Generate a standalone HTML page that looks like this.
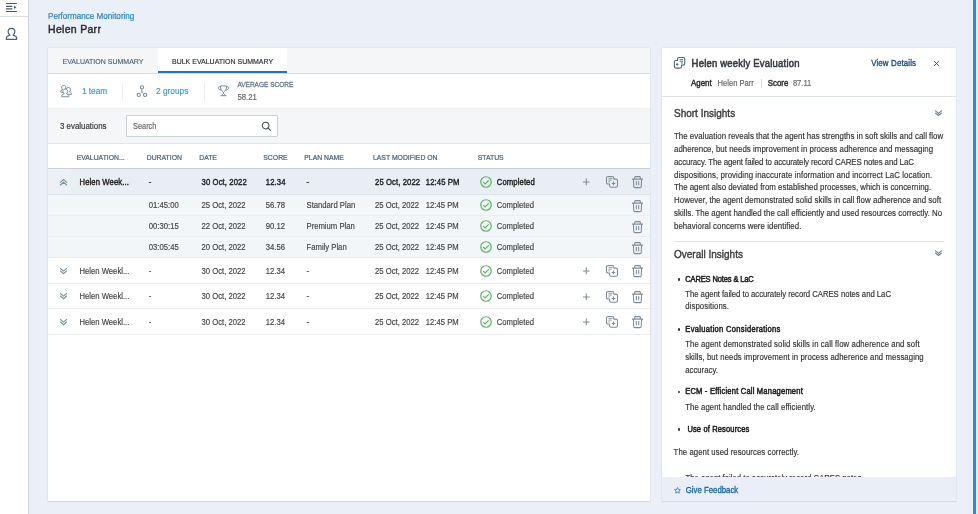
<!DOCTYPE html>
<html><head><meta charset="utf-8">
<style>
*{margin:0;padding:0;box-sizing:border-box;-webkit-text-stroke-width:0.15px}
html,body{width:978px;height:514px;overflow:hidden}
body{background:#eaeff8;font-family:"Liberation Sans",sans-serif;color:#333;position:relative}
.a{position:absolute;white-space:nowrap}
#side{position:absolute;left:0;top:0;width:29px;height:514px;background:#fff;border-right:1px solid #cfd6de}
#side .sep{position:absolute;left:0;top:15.5px;width:28px;height:1px;background:#d9dee3}
.crumb{left:48px;top:12px;font-size:8.1px;color:#2b87c3;-webkit-text-stroke-width:0.2px}
.title{left:48px;top:23px;font-size:10.5px;letter-spacing:0.3px;color:#2e2e2e;-webkit-text-stroke-width:0.45px}
#card{position:absolute;left:48px;top:48px;width:602px;height:453px;background:#fff;box-shadow:0 0 1px rgba(0,0,0,.18),0 1px 1px rgba(0,0,0,.07)}
#tabs{position:absolute;left:0;top:0;width:602px;height:26px;background:#f5f6f8;border-bottom:1px solid #d8dadd}
.tab{position:absolute;top:0;height:25px;font-size:7px;line-height:27px;color:#4d6579;letter-spacing:0;-webkit-text-stroke-width:0.1px}
.tab.act{-webkit-text-stroke-width:0.2px;background:#fff;color:#2a2f35;border-bottom:2px solid #1a79c0;height:25px}
#stats{position:absolute;left:0;top:26px;width:602px;height:34px;background:#fff}
.link{color:#3a97d3;font-size:8.3px}
.vd{position:absolute;width:1px;background:#eceef1}
#srow{position:absolute;left:0;top:60px;width:602px;height:36px;background:#f5f6f8;border-top:1px solid #eef0f2;border-bottom:1px solid #e3e5e8}
.sbox{position:absolute;left:78px;top:6px;width:152px;height:21.5px;background:#fff;border:1px solid #c9d1d9;border-radius:1px}
.th{font-size:6.85px;color:#4a6276;-webkit-text-stroke-width:0.2px}
.td{font-size:7.7px;color:#444;padding-top:1px}
.b{font-weight:400;color:#222;-webkit-text-stroke-width:0.35px;letter-spacing:0.1px}
.sb{-webkit-text-stroke-width:0.3px}
.row{position:absolute;left:0;width:602px}
.ic{position:absolute}
#panel{position:absolute;left:662px;top:48px;width:294px;height:453px;background:#fff;box-shadow:0 0 1px rgba(0,0,0,.18),0 1px 1px rgba(0,0,0,.07)}
.pt{font-size:7.9px;color:#333;line-height:12px}
.h2{font-size:10px;color:#3a3a3a;-webkit-text-stroke-width:0.35px}
.bul{left:15.9px;width:2.6px;height:2.6px;background:#333;border-radius:50%}
.bt{font-size:7.55px;color:#222;-webkit-text-stroke-width:0.45px;line-height:12px}
</style></head><body><div id="wrap" style="position:absolute;left:0;top:0;width:978px;height:514px;will-change:transform">
<div id="side">
  <svg class="ic" style="left:0;top:0" width="28" height="15" viewBox="0 0 28 15"><g stroke="#455c6d" stroke-width="1.15" stroke-linecap="round" fill="none"><path d="M6.4 3.5 H16.4 M6.4 6.3 H11.9 M6.4 8.9 H11.9 M6.4 11.5 H16.4"></path></g><path d="M14 5.8 L16.4 7.35 L14 8.9 Z" fill="#455c6d"></path></svg>
  <div class="sep"></div>
  <svg class="ic" style="left:5px;top:27px" width="13" height="13" viewBox="0 0 13 13"><path d="M6.5 1.3 C4.4 1.3 3.1 2.8 3.1 4.8 C3.1 6.2 3.8 7.3 4.9 7.8 L4.9 8.3 C2.8 8.7 1.3 9.7 1.3 11.2 L1.3 12 Q1.3 12.3 1.6 12.3 L11.4 12.3 Q11.7 12.3 11.7 12 L11.7 11.2 C11.7 9.7 10.2 8.7 8.1 8.3 L8.1 7.8 C9.2 7.3 9.9 6.2 9.9 4.8 C9.9 2.8 8.6 1.3 6.5 1.3 Z" stroke="#4a6070" stroke-width="1.15" fill="none" stroke-linejoin="round"></path></svg>
</div>

<div class="a crumb" style="transform: scaleY(1.15); transform-origin: 0px 52%;">Performance Monitoring</div>
<div class="a title ns">Helen Parr</div>

<div id="card">
  <div id="tabs">
    <div class="tab" style="left:0;width:109px;padding-left:14.5px"><span style="display: inline-block; transform: scaleY(1.15); transform-origin: 0px 52%;">EVALUATION SUMMARY</span></div>
    <div class="tab act" style="left:110px;width:129px;padding-left:14px"><span style="display: inline-block; transform: scaleY(1.15); transform-origin: 0px 52%;">BULK EVALUATION SUMMARY</span></div>
  </div>
  <div id="stats">
    <svg class="ic" style="left:11px;top:10px" width="15" height="15" viewBox="0 0 15 15"><path transform="translate(0.72,0.62) scale(0.62)" d="M6.5 1.3 C4.4 1.3 3.1 2.8 3.1 4.8 C3.1 6.2 3.8 7.3 4.9 7.8 L4.9 8.3 C2.8 8.7 1.3 9.7 1.3 11.2 L1.3 12 Q1.3 12.3 1.6 12.3 L11.4 12.3 Q11.7 12.3 11.7 12 L11.7 11.2 C11.7 9.7 10.2 8.7 8.1 8.3 L8.1 7.8 C9.2 7.3 9.9 6.2 9.9 4.8 C9.9 2.8 8.6 1.3 6.5 1.3 Z" fill="#fff" stroke="#6b8091" stroke-width="0.9" vector-effect="non-scaling-stroke" stroke-linejoin="round"></path><path transform="translate(5.37,2.72) scale(0.62)" d="M6.5 1.3 C4.4 1.3 3.1 2.8 3.1 4.8 C3.1 6.2 3.8 7.3 4.9 7.8 L4.9 8.3 C2.8 8.7 1.3 9.7 1.3 11.2 L1.3 12 Q1.3 12.3 1.6 12.3 L11.4 12.3 Q11.7 12.3 11.7 12 L11.7 11.2 C11.7 9.7 10.2 8.7 8.1 8.3 L8.1 7.8 C9.2 7.3 9.9 6.2 9.9 4.8 C9.9 2.8 8.6 1.3 6.5 1.3 Z" fill="#fff" stroke="#6b8091" stroke-width="0.9" vector-effect="non-scaling-stroke" stroke-linejoin="round"></path><path transform="translate(1.75,4.14) scale(0.7)" d="M6.5 1.3 C4.4 1.3 3.1 2.8 3.1 4.8 C3.1 6.2 3.8 7.3 4.9 7.8 L4.9 8.3 C2.8 8.7 1.3 9.7 1.3 11.2 L1.3 12 Q1.3 12.3 1.6 12.3 L11.4 12.3 Q11.7 12.3 11.7 12 L11.7 11.2 C11.7 9.7 10.2 8.7 8.1 8.3 L8.1 7.8 C9.2 7.3 9.9 6.2 9.9 4.8 C9.9 2.8 8.6 1.3 6.5 1.3 Z" fill="#fff" stroke="#6b8091" stroke-width="0.9" vector-effect="non-scaling-stroke" stroke-linejoin="round"></path></svg>
    <div class="a link" style="left: 33.9px; top: 12px; transform: scaleY(1.15); transform-origin: 0px 52%;">1 team</div>
    <div class="vd" style="left:74px;top:9px;height:18px"></div>
    <svg class="ic" style="left:88px;top:10.5px" width="12" height="13" viewBox="0 0 12 13"><g fill="none" stroke="#7590a3" stroke-width="1.1"><circle cx="5.9" cy="2.4" r="1.6"></circle><circle cx="2.7" cy="9.9" r="1.6"></circle><circle cx="9.1" cy="9.9" r="1.6"></circle><path d="M5.9 4.2 V8.2"></path></g></svg>
    <div class="a link" style="left: 108px; top: 12px; transform: scaleY(1.15); transform-origin: 0px 52%;">2 groups</div>
    <div class="vd" style="left:156px;top:9px;height:18px"></div>
    <svg class="ic" style="left:169px;top:11px" width="13" height="13" viewBox="0 0 13 13"><g fill="none" stroke="#7590a3" stroke-width="1" stroke-linejoin="round"><path d="M3.3 0.9 H9.7 C9.7 4 8.2 6.2 6.5 7.4 C4.8 6.2 3.3 4 3.3 0.9 Z"></path><path d="M3.4 1.6 C1.6 1.6 1.2 2.2 1.4 3.2 C1.7 4.2 2.6 4.8 4 5.2 M9.6 1.6 C11.4 1.6 11.8 2.2 11.6 3.2 C11.3 4.2 10.4 4.8 9 5.2"></path><path d="M6.5 7.4 V8.6 M6.5 8.4 L4.4 10.5 M6.5 8.4 L8.6 10.5 M3.5 10.7 H9.5"></path></g></svg>
    <div class="a" style="left: 189.4px; top: 6.5px; font-size: 6.5px; color: rgb(95, 115, 132); -webkit-text-stroke-width: 0.22px; transform: scaleY(1.15); transform-origin: 0px 52%;">AVERAGE SCORE</div>
    <div class="a" style="left: 189.4px; top: 19px; font-size: 7.8px; color: rgb(102, 102, 102); transform: scaleY(1.15); transform-origin: 0px 52%;">58.21</div>
  </div>
  <div id="srow">
    <div class="a" style="left: 12px; top: 12.6px; font-size: 7.9px; color: rgb(51, 51, 51); transform: scaleY(1.15); transform-origin: 0px 52%;">3 evaluations</div>
    <div class="sbox"><div class="a" style="left: 6px; top: 5.6px; font-size: 7.4px; color: rgb(102, 102, 102); transform: scaleY(1.15); transform-origin: 0px 52%;">Search</div><svg class="ic" style="left:133.7px;top:4.6px" width="11" height="11" viewBox="0 0 11 11"><circle cx="4.6" cy="4.6" r="3.35" fill="none" stroke="#46545e" stroke-width="1.05"></circle><path d="M7.1 7.1 L9.7 9.7" stroke="#46545e" stroke-width="1.1"></path></svg></div>
  </div>
  <div class="row" style="top:96px;height:25px;background:#fff;border-bottom:1px solid #c9d0d8">
<div class="a th" style="left: 28.7px; top: 1.6px; line-height: 23px; transform: scaleY(1.15); transform-origin: 0px 52%;">EVALUATION...</div>
<div class="a th" style="left: 98.7px; top: 1.6px; line-height: 23px; transform: scaleY(1.15); transform-origin: 0px 52%;">DURATION</div>
<div class="a th" style="left: 151.2px; top: 1.6px; line-height: 23px; transform: scaleY(1.15); transform-origin: 0px 52%;">DATE</div>
<div class="a th" style="left: 215.3px; top: 1.6px; line-height: 23px; transform: scaleY(1.15); transform-origin: 0px 52%;">SCORE</div>
<div class="a th" style="left: 256.3px; top: 1.6px; line-height: 23px; transform: scaleY(1.15); transform-origin: 0px 52%;">PLAN NAME</div>
<div class="a th" style="left: 325px; top: 1.6px; line-height: 23px; transform: scaleY(1.15); transform-origin: 0px 52%;">LAST MODIFIED ON</div>
<div class="a th" style="left: 429.7px; top: 1.6px; line-height: 23px; transform: scaleY(1.15); transform-origin: 0px 52%;">STATUS</div>
</div>
<div class="row" style="top:121px;height:26px;background:#e9eef5;border-bottom:1px solid #dde3ea"><div class="a" style="left:0;top:0;width:22px;height:25px;background:#edf1f6"></div><svg class="ic" style="left:11px;top:8.5px" width="9" height="9" viewBox="0 0 9 9"><path d="M1 4.6 L4.5 1.6 L8 4.6 M1 7.2 L4.5 4.2 L8 7.2" fill="none" stroke="#7b93a4" stroke-width="1.15"></path></svg><div class="a td b" style="left: 31.5px; top: 0px; line-height: 25px; transform: scaleY(1.15); transform-origin: 0px 52%;">Helen Week...</div><div class="a td b" style="left: 100.8px; top: 0px; line-height: 25px; transform: scaleY(1.15); transform-origin: 0px 52%;">-</div><div class="a td b" style="left: 153.6px; top: 0px; line-height: 25px; transform: scaleY(1.15); transform-origin: 0px 52%;">30 Oct, 2022</div><div class="a td b" style="left: 217.8px; top: 0px; line-height: 25px; transform: scaleY(1.15); transform-origin: 0px 52%;">12.34</div><div class="a td b" style="left: 258.5px; top: 0px; line-height: 25px; transform: scaleY(1.15); transform-origin: 0px 52%;">-</div><div class="a td b" style="left: 327px; top: 0px; line-height: 25px; transform: scaleY(1.15); transform-origin: 0px 52%;">25 Oct, 2022</div><div class="a td b" style="left: 377.8px; top: 0px; line-height: 25px; transform: scaleY(1.15); transform-origin: 0px 52%;">12:45 PM</div><svg class="ic" style="left:432px;top:6.5px" width="12" height="12" viewBox="0 0 12 12"><circle cx="6" cy="6" r="5.25" fill="none" stroke="#55b65c" stroke-width="1.2"></circle><path d="M3.3 6.1 L5.2 7.9 L8.7 4.3" fill="none" stroke="#55b65c" stroke-width="1.2"></path></svg><div class="a td b" style="left: 448.8px; top: 0px; line-height: 25px; transform: scaleY(1.15); transform-origin: 0px 52%;">Completed</div><svg class="ic" style="left:534px;top:8.0px" width="9" height="10" viewBox="0 0 9 10"><path d="M4.3 1.6 V8.2 M1 4.9 H7.6" stroke="#7d8c97" stroke-width="1.05"></path></svg><svg class="ic" style="left:557px;top:6.0px" width="14" height="14" viewBox="0 0 14 14"><path d="M1.5 3.1 Q1.5 1.5 3.1 1.5 H7.2 Q8.8 1.5 8.8 3.1 V4.1 H10.9 Q12.5 4.1 12.5 5.7 V10.7 Q12.5 12.3 10.9 12.3 H6.2 Q4.6 12.3 4.6 10.7 V9 H3.1 Q1.5 9 1.5 7.4 Z" fill="none" stroke="#7d8c97" stroke-width="1.05" stroke-linejoin="round"></path><path d="M3.4 3.3 H7.6 M3.4 5.1 H6.8 M3.4 6.9 H5" stroke="#7d8c97" stroke-width="0.9"></path><path d="M8.5 6.6 V10.2 M6.7 8.4 H10.3" stroke="#7d8c97" stroke-width="1.05"></path></svg><svg class="ic" style="left:583px;top:6.0px" width="13" height="14" viewBox="0 0 13 14"><path d="M1 4.1 H12 M3.7 4 V2.3 Q3.7 1.6 4.4 1.6 H8.6 Q9.3 1.6 9.3 2.3 V4" fill="none" stroke="#7d8c97" stroke-width="1.05" stroke-linejoin="round"></path><path d="M2.4 4.3 L2.8 11.6 Q2.9 12.6 3.9 12.6 H9.1 Q10.1 12.6 10.2 11.6 L10.6 4.3" fill="none" stroke="#7d8c97" stroke-width="1.05"></path><path d="M5.3 6 V10.2 M7.7 6 V10.2" stroke="#7d8c97" stroke-width="1.05"></path></svg></div>
<div class="row" style="top:147px;height:21px;background:#f3f6f9;border-bottom:1px solid #eaedf1"><div class="a td" style="left: 100.8px; top: 0.2px; line-height: 20px; transform: scaleY(1.15); transform-origin: 0px 52%;">01:45:00</div><div class="a td" style="left: 153.6px; top: 0.2px; line-height: 20px; transform: scaleY(1.15); transform-origin: 0px 52%;">25 Oct, 2022</div><div class="a td" style="left: 217.8px; top: 0.2px; line-height: 20px; transform: scaleY(1.15); transform-origin: 0px 52%;">56.78</div><div class="a td" style="left: 258.5px; top: 0.2px; line-height: 20px; transform: scaleY(1.15); transform-origin: 0px 52%;">Standard Plan</div><div class="a td" style="left: 327px; top: 0.2px; line-height: 20px; transform: scaleY(1.15); transform-origin: 0px 52%;">25 Oct, 2022</div><div class="a td" style="left: 377.8px; top: 0.2px; line-height: 20px; transform: scaleY(1.15); transform-origin: 0px 52%;">12:45 PM</div><svg class="ic" style="left:432px;top:4.0px" width="12" height="12" viewBox="0 0 12 12"><circle cx="6" cy="6" r="5.25" fill="none" stroke="#55b65c" stroke-width="1.2"></circle><path d="M3.3 6.1 L5.2 7.9 L8.7 4.3" fill="none" stroke="#55b65c" stroke-width="1.2"></path></svg><div class="a td" style="left: 448.8px; top: 0.2px; line-height: 20px; transform: scaleY(1.15); transform-origin: 0px 52%;">Completed</div><svg class="ic" style="left:583px;top:3.5px" width="13" height="14" viewBox="0 0 13 14"><path d="M1 4.1 H12 M3.7 4 V2.3 Q3.7 1.6 4.4 1.6 H8.6 Q9.3 1.6 9.3 2.3 V4" fill="none" stroke="#7d8c97" stroke-width="1.05" stroke-linejoin="round"></path><path d="M2.4 4.3 L2.8 11.6 Q2.9 12.6 3.9 12.6 H9.1 Q10.1 12.6 10.2 11.6 L10.6 4.3" fill="none" stroke="#7d8c97" stroke-width="1.05"></path><path d="M5.3 6 V10.2 M7.7 6 V10.2" stroke="#7d8c97" stroke-width="1.05"></path></svg></div>
<div class="row" style="top:168px;height:21px;background:#f3f6f9;border-bottom:1px solid #eaedf1"><div class="a td" style="left: 100.8px; top: 0.2px; line-height: 20px; transform: scaleY(1.15); transform-origin: 0px 52%;">00:30:15</div><div class="a td" style="left: 153.6px; top: 0.2px; line-height: 20px; transform: scaleY(1.15); transform-origin: 0px 52%;">22 Oct, 2022</div><div class="a td" style="left: 217.8px; top: 0.2px; line-height: 20px; transform: scaleY(1.15); transform-origin: 0px 52%;">90.12</div><div class="a td" style="left: 258.5px; top: 0.2px; line-height: 20px; transform: scaleY(1.15); transform-origin: 0px 52%;">Premium Plan</div><div class="a td" style="left: 327px; top: 0.2px; line-height: 20px; transform: scaleY(1.15); transform-origin: 0px 52%;">25 Oct, 2022</div><div class="a td" style="left: 377.8px; top: 0.2px; line-height: 20px; transform: scaleY(1.15); transform-origin: 0px 52%;">12:45 PM</div><svg class="ic" style="left:432px;top:4.0px" width="12" height="12" viewBox="0 0 12 12"><circle cx="6" cy="6" r="5.25" fill="none" stroke="#55b65c" stroke-width="1.2"></circle><path d="M3.3 6.1 L5.2 7.9 L8.7 4.3" fill="none" stroke="#55b65c" stroke-width="1.2"></path></svg><div class="a td" style="left: 448.8px; top: 0.2px; line-height: 20px; transform: scaleY(1.15); transform-origin: 0px 52%;">Completed</div><svg class="ic" style="left:583px;top:3.5px" width="13" height="14" viewBox="0 0 13 14"><path d="M1 4.1 H12 M3.7 4 V2.3 Q3.7 1.6 4.4 1.6 H8.6 Q9.3 1.6 9.3 2.3 V4" fill="none" stroke="#7d8c97" stroke-width="1.05" stroke-linejoin="round"></path><path d="M2.4 4.3 L2.8 11.6 Q2.9 12.6 3.9 12.6 H9.1 Q10.1 12.6 10.2 11.6 L10.6 4.3" fill="none" stroke="#7d8c97" stroke-width="1.05"></path><path d="M5.3 6 V10.2 M7.7 6 V10.2" stroke="#7d8c97" stroke-width="1.05"></path></svg></div>
<div class="row" style="top:189px;height:21px;background:#f3f6f9;border-bottom:1px solid #eaedf1"><div class="a td" style="left: 100.8px; top: 0.2px; line-height: 20px; transform: scaleY(1.15); transform-origin: 0px 52%;">03:05:45</div><div class="a td" style="left: 153.6px; top: 0.2px; line-height: 20px; transform: scaleY(1.15); transform-origin: 0px 52%;">20 Oct, 2022</div><div class="a td" style="left: 217.8px; top: 0.2px; line-height: 20px; transform: scaleY(1.15); transform-origin: 0px 52%;">34.56</div><div class="a td" style="left: 258.5px; top: 0.2px; line-height: 20px; transform: scaleY(1.15); transform-origin: 0px 52%;">Family Plan</div><div class="a td" style="left: 327px; top: 0.2px; line-height: 20px; transform: scaleY(1.15); transform-origin: 0px 52%;">25 Oct, 2022</div><div class="a td" style="left: 377.8px; top: 0.2px; line-height: 20px; transform: scaleY(1.15); transform-origin: 0px 52%;">12:45 PM</div><svg class="ic" style="left:432px;top:4.0px" width="12" height="12" viewBox="0 0 12 12"><circle cx="6" cy="6" r="5.25" fill="none" stroke="#55b65c" stroke-width="1.2"></circle><path d="M3.3 6.1 L5.2 7.9 L8.7 4.3" fill="none" stroke="#55b65c" stroke-width="1.2"></path></svg><div class="a td" style="left: 448.8px; top: 0.2px; line-height: 20px; transform: scaleY(1.15); transform-origin: 0px 52%;">Completed</div><svg class="ic" style="left:583px;top:3.5px" width="13" height="14" viewBox="0 0 13 14"><path d="M1 4.1 H12 M3.7 4 V2.3 Q3.7 1.6 4.4 1.6 H8.6 Q9.3 1.6 9.3 2.3 V4" fill="none" stroke="#7d8c97" stroke-width="1.05" stroke-linejoin="round"></path><path d="M2.4 4.3 L2.8 11.6 Q2.9 12.6 3.9 12.6 H9.1 Q10.1 12.6 10.2 11.6 L10.6 4.3" fill="none" stroke="#7d8c97" stroke-width="1.05"></path><path d="M5.3 6 V10.2 M7.7 6 V10.2" stroke="#7d8c97" stroke-width="1.05"></path></svg></div>
<div class="row" style="top:210px;height:26px;background:#fff;border-bottom:1px solid #eaedf1"><svg class="ic" style="left:11px;top:8.5px" width="9" height="9" viewBox="0 0 9 9"><path d="M1.2 1.2 L4.5 4.1 L7.8 1.2 M1.2 3.8 L4.5 6.7 L7.8 3.8" fill="none" stroke="#7b93a4" stroke-width="1.15"></path></svg><div class="a td" style="left: 31.5px; top: -0.4px; line-height: 25px; transform: scaleY(1.15); transform-origin: 0px 52%;">Helen Weekl...</div><div class="a td" style="left: 100.8px; top: -0.4px; line-height: 25px; transform: scaleY(1.15); transform-origin: 0px 52%;">-</div><div class="a td" style="left: 153.6px; top: -0.4px; line-height: 25px; transform: scaleY(1.15); transform-origin: 0px 52%;">30 Oct, 2022</div><div class="a td" style="left: 217.8px; top: -0.4px; line-height: 25px; transform: scaleY(1.15); transform-origin: 0px 52%;">12.34</div><div class="a td" style="left: 258.5px; top: -0.4px; line-height: 25px; transform: scaleY(1.15); transform-origin: 0px 52%;">-</div><div class="a td" style="left: 327px; top: -0.4px; line-height: 25px; transform: scaleY(1.15); transform-origin: 0px 52%;">25 Oct, 2022</div><div class="a td" style="left: 377.8px; top: -0.4px; line-height: 25px; transform: scaleY(1.15); transform-origin: 0px 52%;">12:45 PM</div><svg class="ic" style="left:432px;top:6.5px" width="12" height="12" viewBox="0 0 12 12"><circle cx="6" cy="6" r="5.25" fill="none" stroke="#55b65c" stroke-width="1.2"></circle><path d="M3.3 6.1 L5.2 7.9 L8.7 4.3" fill="none" stroke="#55b65c" stroke-width="1.2"></path></svg><div class="a td" style="left: 448.8px; top: -0.4px; line-height: 25px; transform: scaleY(1.15); transform-origin: 0px 52%;">Completed</div><svg class="ic" style="left:534px;top:8.0px" width="9" height="10" viewBox="0 0 9 10"><path d="M4.3 1.6 V8.2 M1 4.9 H7.6" stroke="#7d8c97" stroke-width="1.05"></path></svg><svg class="ic" style="left:557px;top:6.0px" width="14" height="14" viewBox="0 0 14 14"><path d="M1.5 3.1 Q1.5 1.5 3.1 1.5 H7.2 Q8.8 1.5 8.8 3.1 V4.1 H10.9 Q12.5 4.1 12.5 5.7 V10.7 Q12.5 12.3 10.9 12.3 H6.2 Q4.6 12.3 4.6 10.7 V9 H3.1 Q1.5 9 1.5 7.4 Z" fill="none" stroke="#7d8c97" stroke-width="1.05" stroke-linejoin="round"></path><path d="M3.4 3.3 H7.6 M3.4 5.1 H6.8 M3.4 6.9 H5" stroke="#7d8c97" stroke-width="0.9"></path><path d="M8.5 6.6 V10.2 M6.7 8.4 H10.3" stroke="#7d8c97" stroke-width="1.05"></path></svg><svg class="ic" style="left:583px;top:6.0px" width="13" height="14" viewBox="0 0 13 14"><path d="M1 4.1 H12 M3.7 4 V2.3 Q3.7 1.6 4.4 1.6 H8.6 Q9.3 1.6 9.3 2.3 V4" fill="none" stroke="#7d8c97" stroke-width="1.05" stroke-linejoin="round"></path><path d="M2.4 4.3 L2.8 11.6 Q2.9 12.6 3.9 12.6 H9.1 Q10.1 12.6 10.2 11.6 L10.6 4.3" fill="none" stroke="#7d8c97" stroke-width="1.05"></path><path d="M5.3 6 V10.2 M7.7 6 V10.2" stroke="#7d8c97" stroke-width="1.05"></path></svg></div>
<div class="row" style="top:236px;height:25px;background:#fff;border-bottom:1px solid #eaedf1"><svg class="ic" style="left:11px;top:8.0px" width="9" height="9" viewBox="0 0 9 9"><path d="M1.2 1.2 L4.5 4.1 L7.8 1.2 M1.2 3.8 L4.5 6.7 L7.8 3.8" fill="none" stroke="#7b93a4" stroke-width="1.15"></path></svg><div class="a td" style="left: 31.5px; top: -0.4px; line-height: 24px; transform: scaleY(1.15); transform-origin: 0px 52%;">Helen Weekl...</div><div class="a td" style="left: 100.8px; top: -0.4px; line-height: 24px; transform: scaleY(1.15); transform-origin: 0px 52%;">-</div><div class="a td" style="left: 153.6px; top: -0.4px; line-height: 24px; transform: scaleY(1.15); transform-origin: 0px 52%;">30 Oct, 2022</div><div class="a td" style="left: 217.8px; top: -0.4px; line-height: 24px; transform: scaleY(1.15); transform-origin: 0px 52%;">12.34</div><div class="a td" style="left: 258.5px; top: -0.4px; line-height: 24px; transform: scaleY(1.15); transform-origin: 0px 52%;">-</div><div class="a td" style="left: 327px; top: -0.4px; line-height: 24px; transform: scaleY(1.15); transform-origin: 0px 52%;">25 Oct, 2022</div><div class="a td" style="left: 377.8px; top: -0.4px; line-height: 24px; transform: scaleY(1.15); transform-origin: 0px 52%;">12:45 PM</div><svg class="ic" style="left:432px;top:6.0px" width="12" height="12" viewBox="0 0 12 12"><circle cx="6" cy="6" r="5.25" fill="none" stroke="#55b65c" stroke-width="1.2"></circle><path d="M3.3 6.1 L5.2 7.9 L8.7 4.3" fill="none" stroke="#55b65c" stroke-width="1.2"></path></svg><div class="a td" style="left: 448.8px; top: -0.4px; line-height: 24px; transform: scaleY(1.15); transform-origin: 0px 52%;">Completed</div><svg class="ic" style="left:534px;top:7.5px" width="9" height="10" viewBox="0 0 9 10"><path d="M4.3 1.6 V8.2 M1 4.9 H7.6" stroke="#7d8c97" stroke-width="1.05"></path></svg><svg class="ic" style="left:557px;top:5.5px" width="14" height="14" viewBox="0 0 14 14"><path d="M1.5 3.1 Q1.5 1.5 3.1 1.5 H7.2 Q8.8 1.5 8.8 3.1 V4.1 H10.9 Q12.5 4.1 12.5 5.7 V10.7 Q12.5 12.3 10.9 12.3 H6.2 Q4.6 12.3 4.6 10.7 V9 H3.1 Q1.5 9 1.5 7.4 Z" fill="none" stroke="#7d8c97" stroke-width="1.05" stroke-linejoin="round"></path><path d="M3.4 3.3 H7.6 M3.4 5.1 H6.8 M3.4 6.9 H5" stroke="#7d8c97" stroke-width="0.9"></path><path d="M8.5 6.6 V10.2 M6.7 8.4 H10.3" stroke="#7d8c97" stroke-width="1.05"></path></svg><svg class="ic" style="left:583px;top:5.5px" width="13" height="14" viewBox="0 0 13 14"><path d="M1 4.1 H12 M3.7 4 V2.3 Q3.7 1.6 4.4 1.6 H8.6 Q9.3 1.6 9.3 2.3 V4" fill="none" stroke="#7d8c97" stroke-width="1.05" stroke-linejoin="round"></path><path d="M2.4 4.3 L2.8 11.6 Q2.9 12.6 3.9 12.6 H9.1 Q10.1 12.6 10.2 11.6 L10.6 4.3" fill="none" stroke="#7d8c97" stroke-width="1.05"></path><path d="M5.3 6 V10.2 M7.7 6 V10.2" stroke="#7d8c97" stroke-width="1.05"></path></svg></div>
<div class="row" style="top:261px;height:26px;background:#fff;border-bottom:1px solid #eaedf1"><svg class="ic" style="left:11px;top:8.5px" width="9" height="9" viewBox="0 0 9 9"><path d="M1.2 1.2 L4.5 4.1 L7.8 1.2 M1.2 3.8 L4.5 6.7 L7.8 3.8" fill="none" stroke="#7b93a4" stroke-width="1.15"></path></svg><div class="a td" style="left: 31.5px; top: -0.4px; line-height: 25px; transform: scaleY(1.15); transform-origin: 0px 52%;">Helen Weekl...</div><div class="a td" style="left: 100.8px; top: -0.4px; line-height: 25px; transform: scaleY(1.15); transform-origin: 0px 52%;">-</div><div class="a td" style="left: 153.6px; top: -0.4px; line-height: 25px; transform: scaleY(1.15); transform-origin: 0px 52%;">30 Oct, 2022</div><div class="a td" style="left: 217.8px; top: -0.4px; line-height: 25px; transform: scaleY(1.15); transform-origin: 0px 52%;">12.34</div><div class="a td" style="left: 258.5px; top: -0.4px; line-height: 25px; transform: scaleY(1.15); transform-origin: 0px 52%;">-</div><div class="a td" style="left: 327px; top: -0.4px; line-height: 25px; transform: scaleY(1.15); transform-origin: 0px 52%;">25 Oct, 2022</div><div class="a td" style="left: 377.8px; top: -0.4px; line-height: 25px; transform: scaleY(1.15); transform-origin: 0px 52%;">12:45 PM</div><svg class="ic" style="left:432px;top:6.5px" width="12" height="12" viewBox="0 0 12 12"><circle cx="6" cy="6" r="5.25" fill="none" stroke="#55b65c" stroke-width="1.2"></circle><path d="M3.3 6.1 L5.2 7.9 L8.7 4.3" fill="none" stroke="#55b65c" stroke-width="1.2"></path></svg><div class="a td" style="left: 448.8px; top: -0.4px; line-height: 25px; transform: scaleY(1.15); transform-origin: 0px 52%;">Completed</div><svg class="ic" style="left:534px;top:8.0px" width="9" height="10" viewBox="0 0 9 10"><path d="M4.3 1.6 V8.2 M1 4.9 H7.6" stroke="#7d8c97" stroke-width="1.05"></path></svg><svg class="ic" style="left:557px;top:6.0px" width="14" height="14" viewBox="0 0 14 14"><path d="M1.5 3.1 Q1.5 1.5 3.1 1.5 H7.2 Q8.8 1.5 8.8 3.1 V4.1 H10.9 Q12.5 4.1 12.5 5.7 V10.7 Q12.5 12.3 10.9 12.3 H6.2 Q4.6 12.3 4.6 10.7 V9 H3.1 Q1.5 9 1.5 7.4 Z" fill="none" stroke="#7d8c97" stroke-width="1.05" stroke-linejoin="round"></path><path d="M3.4 3.3 H7.6 M3.4 5.1 H6.8 M3.4 6.9 H5" stroke="#7d8c97" stroke-width="0.9"></path><path d="M8.5 6.6 V10.2 M6.7 8.4 H10.3" stroke="#7d8c97" stroke-width="1.05"></path></svg><svg class="ic" style="left:583px;top:6.0px" width="13" height="14" viewBox="0 0 13 14"><path d="M1 4.1 H12 M3.7 4 V2.3 Q3.7 1.6 4.4 1.6 H8.6 Q9.3 1.6 9.3 2.3 V4" fill="none" stroke="#7d8c97" stroke-width="1.05" stroke-linejoin="round"></path><path d="M2.4 4.3 L2.8 11.6 Q2.9 12.6 3.9 12.6 H9.1 Q10.1 12.6 10.2 11.6 L10.6 4.3" fill="none" stroke="#7d8c97" stroke-width="1.05"></path><path d="M5.3 6 V10.2 M7.7 6 V10.2" stroke="#7d8c97" stroke-width="1.05"></path></svg></div>
</div>

<div id="panel">
  <svg class="ic" style="left:10px;top:7px" width="15" height="15" viewBox="0 0 15 15"><path d="M2.35 7 Q2.35 5.45 3.9 5.45 L5.55 5.45 L5.55 4.1 Q5.55 2.55 7.1 2.55 L11.2 2.55 Q12.75 2.55 12.75 4.1 L12.75 8.6 Q12.75 10.15 11.2 10.15 L9.55 10.15 L9.55 11.6 Q9.55 13.15 8 13.15 L3.9 13.15 Q2.35 13.15 2.35 11.6 Z" fill="none" stroke="#4d667a" stroke-width="1.1" stroke-linejoin="round"></path><path d="M7.6 4.6 H11 M7.6 6.3 H11 M8.9 8 H11" stroke="#4d667a" stroke-width="0.9"></path><path d="M5.2 8.1 V10.7 M3.9 9.4 H6.5" stroke="#4d667a" stroke-width="1"></path></svg>
  <div class="a sb" style="left: 29.6px; top: 9.7px; font-size: 9.5px; letter-spacing: 0.2px; color: rgb(53, 58, 64); -webkit-text-stroke-width: 0.5px; transform: scaleY(1.15); transform-origin: 0px 52%;">Helen weekly Evaluation</div>
  <div class="a" style="left: 209.2px; top: 11.4px; font-size: 7.9px; letter-spacing: 0.14px; color: rgb(29, 74, 134); -webkit-text-stroke-width: 0.3px; transform: scaleY(1.15); transform-origin: 0px 52%;">View Details</div>
  <svg class="ic" style="left:271.3px;top:11.6px" width="7" height="7" viewBox="0 0 7 7"><path d="M1.1 1.1 L5.9 5.9 M5.9 1.1 L1.1 5.9" stroke="#2f4752" stroke-width="0.9"></path></svg>
  <div class="a" style="left: 29px; top: 30.5px; font-size: 7.9px; color: rgb(51, 51, 51); -webkit-text-stroke-width: 0.45px; transform: scaleY(1.15); transform-origin: 0px 52%;">Agent</div>
  <div class="a" style="left: 55.6px; top: 30.5px; font-size: 7.6px; color: rgb(102, 102, 102); transform: scaleY(1.15); transform-origin: 0px 52%;">Helen Parr</div>
  <div class="a" style="left:99px;top:30.5px;width:1px;height:9px;background:#d6dbe0"></div>
  <div class="a" style="left: 105.7px; top: 30.5px; font-size: 7.9px; color: rgb(51, 51, 51); -webkit-text-stroke-width: 0.45px; transform: scaleY(1.15); transform-origin: 0px 52%;">Score</div>
  <div class="a" style="left: 130.9px; top: 30.5px; font-size: 7.6px; color: rgb(102, 102, 102); transform: scaleY(1.15); transform-origin: 0px 52%;">87.11</div>
  <div class="a" style="left:0;top:48px;width:294px;height:1px;background:#dbe1e7"></div>
  <div class="a h2" style="left: 12px; top: 60px; transform: scaleY(1.15); transform-origin: 0px 52%;">Short Insights</div>
  <svg class="ic" style="left:272px;top:62px" width="9" height="7" viewBox="0 0 9 7"><path d="M1.2 0.6 L4.5 3.3 L7.8 0.6 M1.2 2.8 L4.5 5.5 L7.8 2.8" fill="none" stroke="#607787" stroke-width="1.05"></path></svg>
<div class="a" style="left:12px;top:193px;width:270px;height:1px;background:#dfe4ea"></div>
  <div class="a h2" style="left: 12px; top: 200.6px; transform: scaleY(1.15); transform-origin: 0px 52%;">Overall Insights</div>
  <svg class="ic" style="left:272px;top:202px" width="9" height="7" viewBox="0 0 9 7"><path d="M1.2 0.6 L4.5 3.3 L7.8 0.6 M1.2 2.8 L4.5 5.5 L7.8 2.8" fill="none" stroke="#607787" stroke-width="1.05"></path></svg>
  <div id="ov" class="a" style="left:0;top:0;width:294px;height:429px;overflow:hidden">
<div class="a pt" style="left: 12px; top: 83px; font-size: 7.9px; letter-spacing: 0.021px; transform: scaleY(1.15); transform-origin: 0px 52%;">The evaluation reveals that the agent has strengths in soft skills and call flow</div>
<div class="a pt" style="left: 12px; top: 95.84px; font-size: 7.9px; letter-spacing: 0.024px; transform: scaleY(1.15); transform-origin: 0px 52%;">adherence, but needs improvement in process adherence and messaging</div>
<div class="a pt" style="left: 12px; top: 108.68px; font-size: 7.9px; letter-spacing: -0.096px; transform: scaleY(1.15); transform-origin: 0px 52%;">accuracy. The agent failed to accurately record CARES notes and LaC</div>
<div class="a pt" style="left: 12px; top: 121.52px; font-size: 7.9px; letter-spacing: 0.063px; transform: scaleY(1.15); transform-origin: 0px 52%;">dispositions, providing inaccurate information and incorrect LaC location.</div>
<div class="a pt" style="left: 12px; top: 134.36px; font-size: 7.9px; letter-spacing: -0.011px; transform: scaleY(1.15); transform-origin: 0px 52%;">The agent also deviated from established processes, which is concerning.</div>
<div class="a pt" style="left: 12px; top: 147.2px; font-size: 7.9px; letter-spacing: 0.036px; transform: scaleY(1.15); transform-origin: 0px 52%;">However, the agent demonstrated solid skills in call flow adherence and soft</div>
<div class="a pt" style="left: 12px; top: 160.04px; font-size: 7.9px; letter-spacing: 0.02px; transform: scaleY(1.15); transform-origin: 0px 52%;">skills. The agent handled the call efficiently and used resources correctly. No</div>
<div class="a pt" style="left: 12px; top: 172.88px; font-size: 7.9px; letter-spacing: 0.043px; transform: scaleY(1.15); transform-origin: 0px 52%;">behavioral concerns were identified.</div>
<div class="a bt" style="left: 23.2px; top: 225.7px; font-size: 7.55px; letter-spacing: -0.143px; transform: scaleY(1.15); transform-origin: 0px 52%;">CARES Notes &amp; LaC</div>
<div class="a pt" style="left: 23.2px; top: 240.6px; font-size: 7.75px; letter-spacing: -0.025px; transform: scaleY(1.15); transform-origin: 0px 52%;">The agent failed to accurately record CARES notes and LaC</div>
<div class="a pt" style="left: 23.2px; top: 253.4px; font-size: 7.75px; letter-spacing: 0.095px; transform: scaleY(1.15); transform-origin: 0px 52%;">dispositions.</div>
<div class="a bt" style="left: 23.3px; top: 275.7px; font-size: 7.55px; letter-spacing: 0.309px; transform: scaleY(1.15); transform-origin: 0px 52%;">Evaluation Considerations</div>
<div class="a pt" style="left: 23.2px; top: 290.8px; font-size: 7.75px; letter-spacing: 0.098px; transform: scaleY(1.15); transform-origin: 0px 52%;">The agent demonstrated solid skills in call flow adherence and soft</div>
<div class="a pt" style="left: 23.2px; top: 303.7px; font-size: 7.75px; letter-spacing: 0.086px; transform: scaleY(1.15); transform-origin: 0px 52%;">skills, but needs improvement in process adherence and messaging</div>
<div class="a pt" style="left: 23.2px; top: 316.6px; font-size: 7.75px; letter-spacing: 0.013px; transform: scaleY(1.15); transform-origin: 0px 52%;">accuracy.</div>
<div class="a bt" style="left: 23.2px; top: 338.4px; font-size: 7.55px; letter-spacing: 0.205px; transform: scaleY(1.15); transform-origin: 0px 52%;">ECM - Efficient Call Management</div>
<div class="a pt" style="left: 23.2px; top: 354px; font-size: 7.75px; letter-spacing: 0.086px; transform: scaleY(1.15); transform-origin: 0px 52%;">The agent handled the call efficiently.</div>
<div class="a bt" style="left: 25.4px; top: 375.8px; font-size: 7.55px; letter-spacing: 0.128px; transform: scaleY(1.15); transform-origin: 0px 52%;">Use of Resources</div>
<div class="a pt" style="left: 11.6px; top: 398.5px; font-size: 7.75px; letter-spacing: 0.069px; transform: scaleY(1.15); transform-origin: 0px 52%;">The agent used resources correctly.</div>
<div class="a pt" style="left: 23.5px; top: 424.9px; font-size: 7.75px; letter-spacing: 0px; transform: scaleY(1.15); transform-origin: 0px 52%;">The agent failed to accurately record CARES notes</div>
<div class="a bul" style="top:230.10px"></div>
<div class="a bul" style="top:280.10px"></div>
<div class="a bul" style="top:342.80px"></div>
<div class="a bul" style="top:380.20px"></div>
<div class="a bul" style="top:428.50px"></div>
  </div>
  <div class="a" style="left:0;top:429px;width:294px;height:24px;background:#eaeff7"></div>
  <svg class="ic" style="left:12.3px;top:438.6px" width="7" height="7" viewBox="0 0 7 7"><path d="M3.5 0.6 L4.35 2.45 L6.4 2.7 L4.9 4.1 L5.3 6.2 L3.5 5.15 L1.7 6.2 L2.1 4.1 L0.6 2.7 L2.65 2.45 Z" fill="none" stroke="#2f86c8" stroke-width="0.9" stroke-linejoin="round"></path></svg>
  <div class="a" style="left: 23.8px; top: 437.8px; font-size: 7.8px; color: rgb(26, 104, 166); -webkit-text-stroke-width: 0.3px; transform: scaleY(1.15); transform-origin: 0px 52%;">Give Feedback</div>
</div>

<div class="a" style="left:973px;top:0;width:3px;height:514px;background:#1e8ff5"></div>
</div>
</body></html>
